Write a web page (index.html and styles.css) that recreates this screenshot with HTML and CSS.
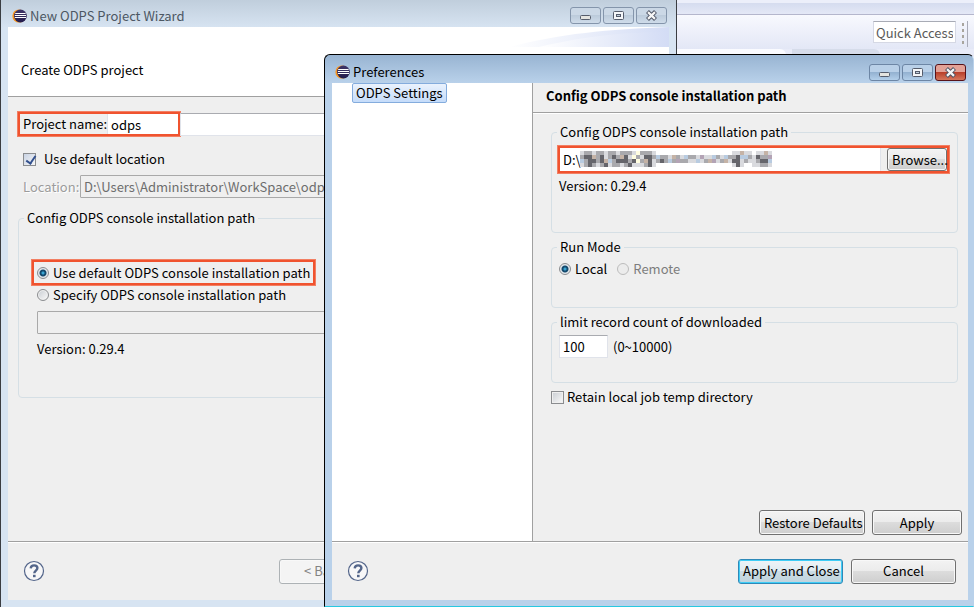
FILE: index.html
```html
<!DOCTYPE html>
<html lang="en">
<head>
<meta charset="UTF-8">
<meta name="viewport" content="width=device-width, initial-scale=1.0">
<title>New ODPS Project Wizard</title>
<link rel="stylesheet" href="styles.css">
</head>
<body>
<svg width="0" height="0" class="defs">
  <defs>
    <linearGradient id="ball" x1="0" y1="0" x2="0" y2="1">
      <stop offset="0" stop-color="#3f3568"/>
      <stop offset="1" stop-color="#241c4c"/>
    </linearGradient>
    <symbol id="eclipse" viewBox="0 0 16 16">
      <circle cx="7" cy="8" r="6.6" fill="#f7941e"/>
      <circle cx="8.4" cy="8" r="6.400" fill="url(#ball)"/>
      <path d="M3.200 5.500h10.400M2.800 7.500h11.200M2.800 9.500h11.200" stroke="#fff"/>
    </symbol>
    <symbol id="minimize" viewBox="0 0 13 11">
      <rect x="1.5" y="5.500" width="10" height="4" rx="1" fill="#e4e4e0" stroke="#555c6b"/>
    </symbol>
    <symbol id="maximize" viewBox="0 0 13 11">
      <rect x="1.500" y="1.500" width="10" height="8" rx="1" fill="#f4f6f8" stroke="#555c6b"/>
      <rect x="4.500" y="4.500" width="4" height="2" fill="#c3d0de" stroke="#555c6b"/>
    </symbol>
    <symbol id="close" viewBox="0 0 13 11">
      <path d="M2.500 1.600l8 7.800M10.500 1.600l-8 7.800" stroke="#4d5363" stroke-width="4.200"/>
      <path d="M3 2.100l7 6.800M10 2.100l-7 6.800" stroke="#f6f6f6" stroke-width="2.200"/>
    </symbol>
    <symbol id="help" viewBox="0 0 22 22">
      <circle cx="11" cy="11" r="9.500" fill="#f7f7f8" stroke="#53658a" stroke-width="1.200"/>
      <path d="M7.700 8.300c.2-2 1.600-2.900 3.400-2.900 2 0 3.300 1.100 3.300 2.700 0 2.500-3 2.600-3.100 5.100" fill="none" stroke="#53658a" stroke-width="2.400"/>
      <rect x="10" y="14.800" width="2.600" height="2.400" fill="#53658a"/>
    </symbol>
  </defs>
</svg>

<div class="workbench">
  <div class="menubar"></div>
  <div class="toolbar">
    <input class="quick-access" type="text" value="Quick Access" aria-label="Quick Access">
    <span class="grip"></span>
  </div>
  <div class="tabs"><span class="tab"></span><span class="tab inactive"></span></div>
</div>

<section class="window wizard">
  <header class="titlebar">
    <svg class="app-icon"><use href="#eclipse"/></svg>
    <span class="title">New ODPS Project Wizard</span>
    <button class="win-btn" aria-label="Minimize"><svg><use href="#minimize"/></svg></button>
    <button class="win-btn" aria-label="Maximize"><svg><use href="#maximize"/></svg></button>
    <button class="win-btn" aria-label="Close"><svg><use href="#close"/></svg></button>
  </header>
  <div class="content">
    <div class="banner">
      <span>Create ODPS project</span>
      <svg class="swoosh" viewBox="0 0 160 20" preserveAspectRatio="none">
        <defs>
          <linearGradient id="sweep">
            <stop offset="0" stop-color="#fff"/>
            <stop offset="1" stop-color="#d3dcf5"/>
          </linearGradient>
        </defs>
        <path d="M0 20C50 7 100 2 160 0v20z" fill="url(#sweep)"/>
        <path d="M30 20C80 8 120 5 160 5v15z" fill="url(#sweep)"/>
      </svg>
    </div>
    <div class="page">
      <div class="name-row">
        <div class="highlight name-mark">
          <label for="project-name">Project name:</label>
          <input id="project-name" class="name-input" type="text" value="odps">
        </div>
        <span class="name-rest"></span>
      </div>
      <label class="check default-location"><input type="checkbox" checked>Use default location</label>
      <div class="location-row">
        <label for="location">Location:</label>
        <input id="location" class="field" type="text" value="D:\Users\Administrator\WorkSpace\odps" disabled>
      </div>
      <fieldset class="group console-group">
        <legend>Config ODPS console installation path</legend>
        <div class="highlight radio-mark">
          <label class="check"><input type="radio" name="console" checked>Use default ODPS console installation path</label>
        </div>
        <label class="check specify"><input type="radio" name="console">Specify ODPS console installation path</label>
        <input class="field path-field" type="text" aria-label="Console path" disabled>
        <div class="wizard-version">Version: 0.29.4</div>
      </fieldset>
    </div>
    <footer class="footer">
      <button class="help" aria-label="Help"><svg><use href="#help"/></svg></button>
      <button class="btn back" disabled>&lt; Back</button>
    </footer>
  </div>
</section>

<section class="window preferences">
  <header class="titlebar">
    <svg class="app-icon"><use href="#eclipse"/></svg>
    <span class="title">Preferences</span>
    <button class="win-btn" aria-label="Minimize"><svg><use href="#minimize"/></svg></button>
    <button class="win-btn" aria-label="Maximize"><svg><use href="#maximize"/></svg></button>
    <button class="win-btn close" aria-label="Close"><svg><use href="#close"/></svg></button>
  </header>
  <div class="content">
    <div class="split">
      <nav class="tree"><a class="tree-item" href="#settings">ODPS Settings</a></nav>
      <main class="settings" id="settings">
        <h1>Config ODPS console installation path</h1>
        <div class="settings-body">
          <fieldset class="group path-group">
            <legend>Config ODPS console installation path</legend>
            <div class="highlight path-mark">
              <input class="path-input" type="text" value="D:\" aria-label="Installation path">
              <!-- pixelated part of the path -->
              <svg class="mosaic" viewBox="0 0 192 16" shape-rendering="crispEdges" fill="none" stroke-width="4">
                <path stroke="#d9dade" d="M0 2h56M60 2h16M0 6h192M0 10h192M0 14h76M152 2h20M176 2h16M152 14h12M172 14h20"/>
                <path stroke="#a9a9ad" d="M4 2h8M16 2h8M28 2h8M40 2h12M60 2h12M0 6h4M12 6h8M28 6h4M36 6h4M56 6h4M72 6h4M80 6h8M96 6h4M108 6h8M136 6h4M148 6h8M168 6h4M180 6h8M4 10h4M16 10h4M32 10h4M48 10h4M60 10h4M76 10h4M84 10h4M92 10h4M100 10h8M124 10h4M140 10h4M164 10h4M176 10h4M4 14h12M20 14h8M32 14h8M44 14h8M64 14h8M156 14h4M180 14h8"/>
                <path stroke="#65656b" d="M4 6h8M20 6h4M32 6h4M44 6h4M64 6h8M156 6h4M176 6h4M8 10h8M20 10h8M36 10h4M40 10h8M52 10h4M68 10h4M80 10h4M152 10h8M180 10h8M8 14h4M24 14h4M48 14h4M68 14h4M156 14h4"/>
                <path stroke="#c5b3a6" d="M12 6h4M24 10h4M40 6h4M64 10h4M92 6h4M128 10h4M144 10h4M160 2h4M184 2h4"/>
                <path stroke="#b8cbe0" d="M0 10h4M28 10h4M76 6h4M88 10h4M104 6h4M116 10h4M132 6h4M144 6h4M160 6h8M188 10h4"/>
                <path stroke="#fffde0" d="M56 2h4M56 10h4M52 6h4"/>
                <path stroke="#b3a3b5" d="M96 10h4M120 6h4M132 10h4M188 6h4"/>
              </svg>
              <button class="btn browse">Browse...</button>
            </div>
            <div class="version">Version: 0.29.4</div>
          </fieldset>
          <fieldset class="group mode-group">
            <legend>Run Mode</legend>
            <div class="modes">
              <label class="check"><input type="radio" name="mode" checked>Local</label>
              <label class="check disabled"><input type="radio" name="mode" disabled>Remote</label>
            </div>
          </fieldset>
          <fieldset class="group limit-group">
            <legend>limit record count of downloaded</legend>
            <div class="limit">
              <input id="limit" class="limit-input" type="text" value="100">
              <label for="limit">(0~10000)</label>
            </div>
          </fieldset>
          <label class="check retain"><input type="checkbox">Retain local job temp directory</label>
        </div>
        <div class="page-buttons">
          <button class="btn restore">Restore Defaults</button>
          <button class="btn apply">Apply</button>
        </div>
      </main>
    </div>
    <footer class="footer">
      <button class="help" aria-label="Help"><svg><use href="#help"/></svg></button>
      <button class="btn primary">Apply and Close</button>
      <button class="btn cancel">Cancel</button>
    </footer>
  </div>
</section>
</body>
</html>
```
FILE: styles.css
```css
* {
  box-sizing: border-box;
}
body {
  margin: 0;
  height: 100vh;
  overflow: hidden;
  position: relative;
  font: 13px/18px "Noto Sans CJK SC", "Noto Sans", sans-serif;
  color: #000;
  background: #fff;
}
input, button {
  font: inherit;
  color: inherit;
  margin: 0;
}
label, legend {
  white-space: nowrap;
}
.defs {
  position: absolute;
}
.workbench {
  margin-left: 676px;
}
.menubar {
  height: 15px;
  background: linear-gradient(#eceffa 0 3px, #d5dcef 3px, #e4e8f6);
  border-bottom: 1px solid #b4b6cc;
}
.toolbar {
  display: flex;
  justify-content: flex-end;
  gap: 6px;
  height: 34px;
  padding: 6px 6px 2px;
  background: linear-gradient(#f8f9fe, #e3e7f6);
}
.quick-access {
  width: 83px;
  height: 22px;
  padding: 0 2px;
  border: 1px solid #d5d8e4;
  border-top-color: #a8abb5;
  color: #5a5a5a;
}
.grip {
  width: 6px;
  border-right: 1px solid #a9abb8;
  background: repeating-linear-gradient(#a8a59e 0 3px, transparent 3px 6px) left / 2px 22px no-repeat;
}
.tabs {
  display: flex;
  gap: 6px;
  height: 8px;
  background: #e8ebf8;
}
.tab {
  width: 110px;
  background: #fafbff;
  border-radius: 0 6px 0 0;
}
.tab.inactive {
  width: 88px;
  background: #d6dcea;
}

.window {
  position: absolute;
  display: flex;
  flex-direction: column;
  padding: 0 7px 7px;
  border: 1px solid #3a3d42;
}
.wizard {
  left: 0;
  top: -1px;
  bottom: 0;
  width: 677px;
  border-bottom: 0;
  background: linear-gradient(#c0cedc, #d7e4f2 28px);
}
.preferences {
  left: 324px;
  right: 0;
  top: 54px;
  bottom: 0;
  padding: 0 5px 6px 7px;
  border-color: #000;
  border-right-color: #b9d1ea;
  border-bottom-color: #27c8e0;
  border-radius: 6px 6px 0 0;
  background: linear-gradient(#98b4d2, #b9d1ea 28px);
}
.titlebar {
  display: flex;
  align-items: center;
  height: 27px;
  padding: 4px 2px 0 4px;
}
.preferences .titlebar {
  height: 28px;
  padding: 6px 2px 0 3px;
}
.app-icon {
  width: 16px;
  height: 16px;
}
.title {
  flex: 1;
  padding-left: 2px;
}
.wizard .title {
  color: #4c5763;
}
.win-btn {
  display: flex;
  align-items: center;
  justify-content: center;
  width: 31px;
  height: 17px;
  margin-left: 2px;
  padding: 0;
  border: 1px solid #8495ab;
  border-radius: 3px;
  background: linear-gradient(#cbd8e6 50%, #bccbdb 50%, #cfdcea);
}
.win-btn svg {
  width: 13px;
  height: 11px;
}
.preferences .win-btn {
  border-color: #6d86a5;
  background: linear-gradient(#b9d0e8 50%, #94b2d1 50%, #b3cfea);
}
.preferences .close {
  border-color: #571219;
  background: linear-gradient(#e3a297 50%, #b9402b 50%, #d5775c);
}
.content {
  flex: 1;
  min-height: 0;
  display: flex;
  flex-direction: column;
  background: #efefef;
}

.banner {
  position: relative;
  height: 70px;
  padding: 34px 13px 0;
  background: #fff;
  border-bottom: 1px solid #a0a0a0;
}
.swoosh {
  position: absolute;
  right: 0;
  top: 0;
  width: 160px;
  height: 20px;
}
.page {
  flex: 1;
  padding: 15px 10px 0;
}
.highlight {
  border: 2px solid #f0532f;
  outline: 1px solid #f27f63;
}
.name-row {
  display: flex;
  align-items: center;
}
.name-mark {
  display: flex;
  align-items: center;
  width: 162px;
  height: 24px;
  padding-left: 3px;
}
.name-mark label {
  width: 84px;
}
.name-input {
  flex: 1;
  min-width: 0;
  height: 20px;
  padding: 0 3px;
  border: 0;
  border-left: 1px solid #e0e3ea;
}
.name-rest {
  flex: 1;
  height: 23px;
  background: #fff;
  border: 1px solid #e0e3ea;
  border-top-color: #a9abb0;
}
.check {
  display: flex;
  align-items: center;
}
.check input {
  appearance: none;
  flex: none;
  width: 13px;
  height: 13px;
  margin-right: 3px;
  border: 1px solid #8a8c8f;
  background: linear-gradient(135deg, #cdd1d6, #f6f6f6) content-box #f4f4f4;
  padding: 1px;
}
.check input[type="radio"] {
  width: 12px;
  height: 12px;
  margin-right: 4px;
  border-radius: 50%;
}
.check input[type="radio"]:checked {
  background: radial-gradient(circle, #3aa6d4 0 1px, #144a6e 2px 3px, #e4e8ec 4px);
}
.check input[type="checkbox"]:checked {
  background: linear-gradient(135deg, #c9d3e4, #f6f6f6) content-box #f4f4f4;
  padding: 0;
}
.check input[type="checkbox"]:checked::after {
  content: "";
  display: block;
  width: 4px;
  height: 8px;
  margin: 0 0 0 4px;
  border: solid #32508e;
  border-width: 0 2px 2px 0;
  transform: rotate(35deg);
}
.check.disabled {
  color: #7d7d7d;
}
.check.disabled input {
  border-color: #bcbcbc;
  background: #ececec;
}
.default-location {
  margin: 14px 0 7px 5px;
}
.default-location input {
  margin-right: 8px;
}
.location-row {
  display: flex;
  align-items: center;
  padding-left: 5px;
}
.location-row label {
  width: 57px;
  color: #9c9c9c;
  text-shadow: 1px 1px #fff;
}
.field {
  flex: 1;
  height: 23px;
  padding: 0 3px;
  border: 1px solid #a9a9a9;
  border-radius: 1px;
  background: #efefef;
}
.field:disabled {
  color: #6d6d6d;
}
.group {
  min-width: 0;
  margin: 0;
  padding: 0 7px;
  border: 1px solid #d5dfe5;
  border-radius: 4px;
}
.group legend {
  padding: 0 3px;
  margin-left: -2px;
}
.console-group {
  height: 189px;
  margin-top: 11px;
  padding: 0 13px;
}
.console-group legend {
  margin-left: -8px;
}
.radio-mark {
  display: flex;
  width: 283px;
  height: 25px;
  margin: 33px 0 0;
  padding: 2px 3px;
}
.specify {
  padding: 1px 0 0 5px;
}
.path-field {
  display: block;
  width: 100%;
  margin: 7px 0 5px 5px;
}
.wizard-version {
  padding: 1px 0 0 5px;
}
.footer {
  display: flex;
  align-items: center;
  height: 59px;
  padding: 0 12px 0 15px;
  border-top: 1px solid #a0a0a0;
  box-shadow: inset 0 1px #fff;
}
.help {
  width: 22px;
  height: 22px;
  padding: 0;
  border: 0;
  background: none;
}
.help svg {
  display: block;
  width: 22px;
  height: 22px;
}
.btn {
  height: 25px;
  padding: 0 4px;
  border: 1px solid #707070;
  border-radius: 3px;
  background: linear-gradient(#f3f3f3, #ebebeb 50%, #dcdcdc 50%, #cecece);
  box-shadow: inset 0 0 0 1px #f8f8f8;
  white-space: nowrap;
}
.back {
  width: 90px;
  margin-left: 234px;
  border-color: #adb2b5;
  background: #f4f4f4;
  color: #838383;
}

.split {
  flex: 1;
  display: flex;
  min-height: 0;
}
.tree {
  width: 201px;
  padding-left: 20px;
  background: #fff;
  border-right: 1px solid #a0a0a0;
}
.tree-item {
  display: inline-block;
  height: 20px;
  padding: 0 3px;
  border: 1px solid #84acdd;
  border-radius: 2px;
  background: linear-gradient(#eaf2fd, #c5dcfa);
  color: #000;
  text-decoration: none;
}
.settings {
  flex: 1;
  min-width: 0;
  display: flex;
  flex-direction: column;
}
.settings h1 {
  height: 30px;
  margin: 0;
  padding: 4px 13px;
  font-size: 13px;
  line-height: 18px;
  border-bottom: 1px solid #a0a0a0;
  box-shadow: 0 1px #fff;
}
.settings-body {
  flex: 1;
  display: flex;
  flex-direction: column;
  padding: 10px 10px 0 18px;
}
.path-group {
  height: 110px;
}
.path-mark {
  position: relative;
  display: flex;
  height: 27px;
  margin: 5px 1px 0 -1px;
}
.path-input {
  flex: 1;
  min-width: 0;
  padding: 0 3px;
  border: 0;
  border-right: 1px solid #e0e3ea;
}
.mosaic {
  position: absolute;
  left: 20px;
  top: 3px;
  width: 192px;
  height: 16px;
}
.browse {
  width: 60px;
  height: 23px;
  margin-left: 6px;
}
.version {
  padding-top: 4px;
}
.mode-group {
  height: 70px;
  margin-top: 5px;
}
.modes {
  display: flex;
  gap: 10px;
  padding-top: 4px;
}
.limit-group {
  height: 70px;
  margin-top: 5px;
}
.limit {
  display: flex;
  align-items: center;
  gap: 5px;
  padding-top: 4px;
}
.limit-input {
  width: 49px;
  height: 23px;
  padding: 0 3px;
  border: 1px solid #e0e3ea;
  border-top-color: #a9abb0;
}
.retain {
  margin-top: 5px;
}
.page-buttons {
  display: flex;
  justify-content: flex-end;
  gap: 7px;
  padding: 0 6px 6px;
}
.restore {
  width: 106px;
}
.apply {
  width: 90px;
}
.primary {
  width: 105px;
  margin-left: auto;
  border-color: #2e89b8;
  background: linear-gradient(#eef4f7, #dfebf1 50%, #cbdce4 50%, #bfd3dd);
  box-shadow: inset 0 0 0 1px #3fcdf6;
}
.cancel {
  width: 105px;
  margin-left: 8px;
}
```
